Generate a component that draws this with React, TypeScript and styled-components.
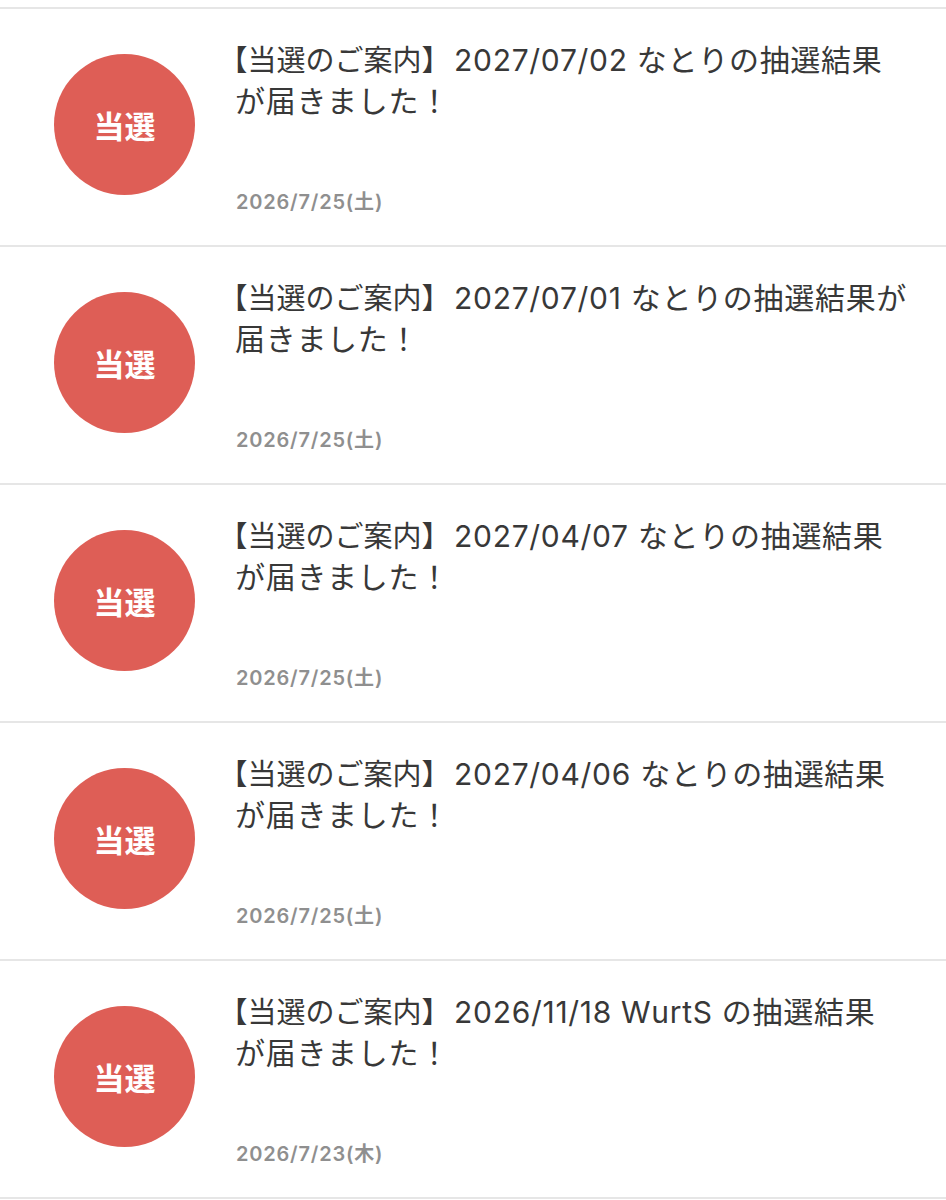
import React from "react";
import styled, { createGlobalStyle } from "styled-components";

const GlobalStyle = createGlobalStyle`
  html, body {
    margin: 0;
    padding: 0;
    background: #ffffff;
  }
  body {
    font-family: "Inter", "Noto Sans CJK JP", "Noto Sans", sans-serif;
    -webkit-font-smoothing: antialiased;
  }
`;

type Notice = {
  first: string; // first line after the 【当選のご案内】 label
  second: string;
  date: string;
};

const notices: Notice[] = [
  { first: "2027/07/02 なとりの抽選結果", second: "が届きました！", date: "2026/7/25(土)" },
  { first: "2027/07/01 なとりの抽選結果が", second: "届きました！", date: "2026/7/25(土)" },
  { first: "2027/04/07 なとりの抽選結果", second: "が届きました！", date: "2026/7/25(土)" },
  { first: "2027/04/06 なとりの抽選結果", second: "が届きました！", date: "2026/7/25(土)" },
  { first: "2026/11/18 WurtS の抽選結果", second: "が届きました！", date: "2026/7/23(木)" },
];

export default function App() {
  return (
    <>
      <GlobalStyle />
      <List>
        {notices.map((n, i) => (
          <Row key={i}>
            <Badge>当選</Badge>
            <Body>
              <Title>
                <Line>
                  <Label>
                    <Bracket>【</Bracket>当選のご案内<Bracket>】</Bracket>
                  </Label>
                  {n.first}
                </Line>
                <Line>{n.second}</Line>
              </Title>
              <DateText>{n.date}</DateText>
            </Body>
          </Row>
        ))}
      </List>
    </>
  );
}

const List = styled.ul`
  list-style: none;
  margin: 7px 0 0;
  padding: 0;
  border-top: 2px solid #e6e6e6;
`;

const Row = styled.li`
  display: flex;
  align-items: flex-start;
  height: 236px;
  border-bottom: 2px solid #e6e6e6;
  padding-left: 54px;
`;

const Badge = styled.div`
  flex: none;
  width: 141px;
  height: 141px;
  margin-top: 45px;
  border-radius: 50%;
  background: #de5e56;
  color: #ffffff;
  display: flex;
  align-items: center;
  justify-content: center;
  font-family: "Noto Sans CJK JP", sans-serif;
  font-size: 31px;
  font-weight: 700;
`;

const Body = styled.div`
  display: flex;
  flex-direction: column;
  margin-left: 40px;
  padding-top: 29px;
`;

const Title = styled.div`
  font-size: 30px;
  line-height: 41px;
  letter-spacing: 0.7px;
  color: #383838;
`;

const Line = styled.div`
  white-space: nowrap;
`;

const Label = styled.span`
  display: inline-block;
  margin-left: -2px;
  margin-right: 18px;
  letter-spacing: 0;
  font-size: 29px;
`;

const Bracket = styled.span`
  font-family: "Noto Sans CJK JP", sans-serif;
  font-feature-settings: "halt";
`;

const DateText = styled.div`
  margin-top: 68px;
  padding-left: 1px;
  font-size: 20px;
  line-height: 24px;
  font-weight: 600;
  letter-spacing: 0.8px;
  color: #8f8f8f;
`;
